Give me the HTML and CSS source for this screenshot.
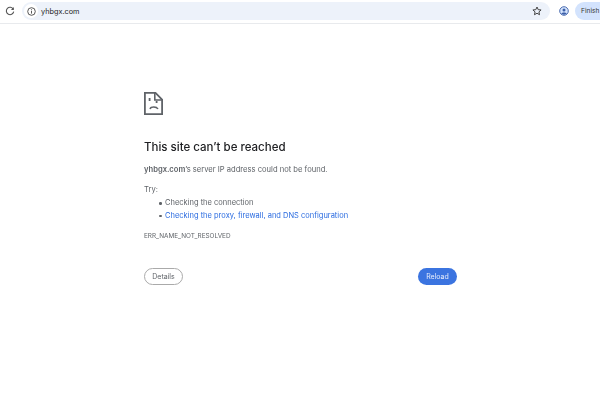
FILE: index.html
```html
<!DOCTYPE html>
<html lang="en">
<head>
<meta charset="utf-8">
<title>yhbgx.com</title>
<link rel="stylesheet" href="styles.css">
</head>
<body>
<header class="toolbar">
  <svg class="reload" width="10" height="10" viewBox="0 0 10 10"><path d="M8.3 3.2A3.7 3.7 0 1 0 8.7 5.6" fill="none" stroke="#555" stroke-width="1.1"/><path d="M8.8 1v3H5.9z" fill="#555"/></svg>
  <div class="omnibox">
    <span class="info-chip"><svg width="9" height="9" viewBox="0 0 9 9"><circle cx="4.5" cy="4.5" r="3.8" fill="none" stroke="#444" stroke-width=".9"/><path d="M4.5 4v2.6M4.5 2.3v1" stroke="#444" stroke-width=".9"/></svg></span>
    <span class="url">yhbgx.com</span>
    <svg class="star" width="10" height="10" viewBox="0 0 12 12"><path d="M6 1.2l1.45 3.2 3.45.35-2.6 2.3.75 3.4L6 8.7l-3.05 1.75.75-3.4-2.6-2.3 3.45-.35z" fill="none" stroke="#444" stroke-width="1.2" stroke-linejoin="round"/></svg>
  </div>
  <svg class="profile" width="10" height="10" viewBox="0 0 10 10"><circle cx="5" cy="5" r="4.3" fill="#d3e3fd" stroke="#3c5fa8" stroke-width=".9"/><circle cx="5" cy="3.9" r="1.5" fill="#3c5fa8"/><path d="M2.3 7.6C3.2 6 6.8 6 7.7 7.6 6.5 9 3.5 9 2.3 7.6z" fill="#3c5fa8"/></svg>
  <span class="finish">Finish</span>
</header>
<main class="error">
  <svg class="sad-page" width="19" height="23" viewBox="0 0 19 23"><path d="M.9.9h10.6l6.6 6.6v14.6H.9z" fill="none" stroke="#5f6368" stroke-width="1.8"/><path d="M10.8 1v7h7" fill="none" stroke="#5f6368" stroke-width="1.6"/><path d="M5.6 6v3M12.6 9v2" stroke="#5f6368" stroke-width="1.8"/><path d="M6 17c1-2.6 6.5-2.6 8 0" fill="none" stroke="#5f6368" stroke-width="1.5"/></svg>
  <h1 class="title">This site can’t be reached</h1>
  <p class="summary"><b>yhbgx.com</b>’s server IP address could not be found.</p>
  <p class="try">Try:</p>
  <ul class="suggestions">
    <li>Checking the connection</li>
    <li><a class="link">Checking the proxy, firewall, and DNS configuration</a></li>
  </ul>
  <p class="code">ERR_NAME_NOT_RESOLVED</p>
  <div class="actions">
    <button class="btn details">Details</button>
    <button class="btn reload-btn">Reload</button>
  </div>
</main>
</body>
</html>
```
FILE: styles.css
```css
* { box-sizing: border-box; }
html, body { margin: 0; height: 100%; overflow: hidden; }
body { background: #fff; font-family: Inter, "Liberation Sans", sans-serif; color: #5f6368; filter: blur(.3px); }
.toolbar { height: 24px; display: flex; align-items: center; border-bottom: 1px solid #e8eaed; padding: 0 0 1px 5px; overflow: hidden; }
.reload { flex: none; }
.omnibox { flex: none; width: 528px; height: 18px; margin-left: 7px; background: #edf2fa; border-radius: 9px; display: flex; align-items: center; padding: 0 8px 0 2px; }
.info-chip { width: 14px; height: 14px; border-radius: 50%; background: #fff; display: flex; align-items: center; justify-content: center; }
.url { margin-left: 3px; font-size: 7.3px; color: #222; }
.star { margin-left: auto; }
.profile { flex: none; margin-left: 9px; }
.finish { flex: none; margin-left: 6px; height: 18px; width: 25px; border-radius: 9px 0 0 9px; background: #d3e3fd; color: #333; font-size: 6.6px; line-height: 18px; padding-left: 6px; white-space: nowrap; }
.error { width: 313px; margin-left: 144px; padding-top: 68px; }
.sad-page { display: block; }
.title { margin: 23px 0 0; font-size: 11.5px; line-height: 18px; font-weight: 500; color: #202124; }
.summary { margin: 7px 0 0; font-size: 7.6px; line-height: 14px; }
.summary b { font-weight: 600; }
.try { margin: 7px 0 0; font-size: 7.6px; line-height: 12px; }
.suggestions { margin: 1px 0 0; padding: 0 0 0 15px; font-size: 7.5px; line-height: 12.5px; list-style: none; }
.suggestions li { display: flex; align-items: center; gap: 3.5px; }
.suggestions li::before { content: ""; width: 2.5px; height: 2.5px; border-radius: 50%; background: #5f6368; }
.link { color: #2a6be0; }
.code { margin: 9px 0 0; font-size: 6.4px; line-height: 10px; }
.actions { display: flex; justify-content: space-between; margin-top: 27px; }
.btn { height: 17px; border-radius: 9px; font-family: inherit; font-size: 7px; padding: 0; }
.details { width: 39px; background: #fff; border: 1px solid #aaa; color: #5f6368; }
.reload-btn { width: 39px; background: #3b74e0; border: 0; color: #e8eefc; }
```
